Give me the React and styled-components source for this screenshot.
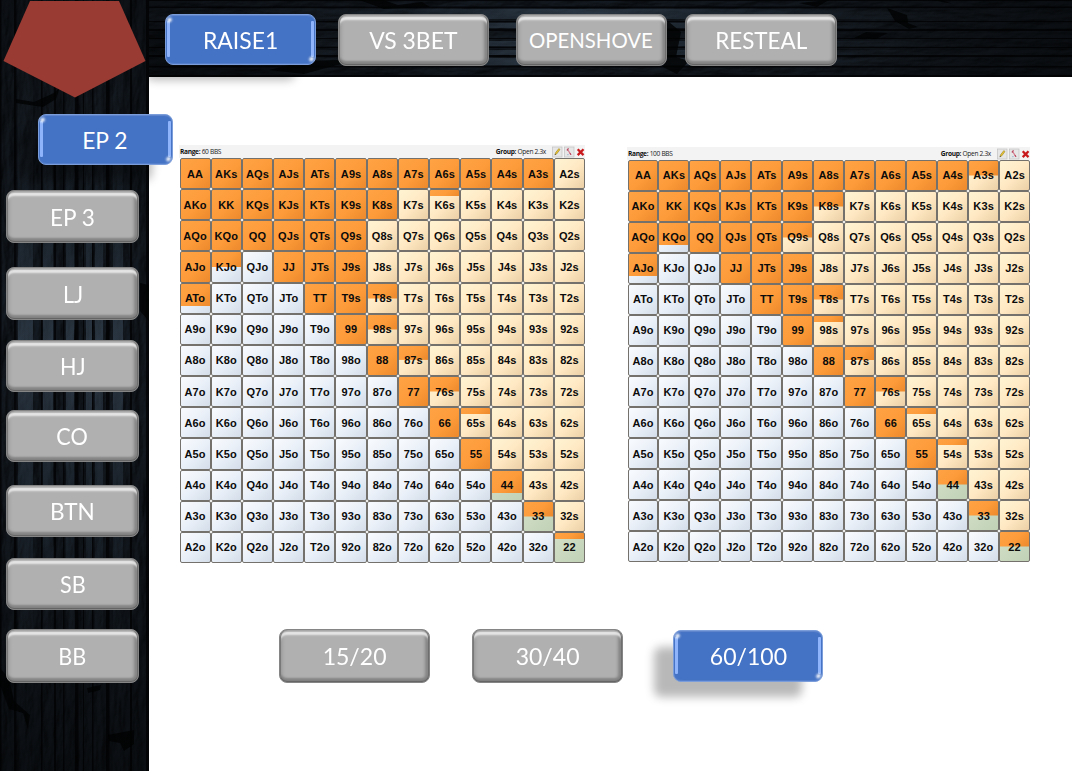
import React from "react";
import styled, { createGlobalStyle, css } from "styled-components";

const Global = createGlobalStyle`
  *, *::before, *::after { box-sizing: border-box; }
  html, body { margin: 0; padding: 0; background: #fff; }
  body { width: 1072px; height: 771px; overflow: hidden; }
`;

const Page = styled.div`
  display: grid;
  grid-template-columns: 149px 923px;
  height: 771px;
  overflow: hidden;
  font-family: Lato, "Liberation Sans", sans-serif;
`;

const Sidebar = styled.aside`
  position: relative;
  z-index: 2;
  display: flex;
  flex-direction: column;
  height: 771px;
  background: #05080b;
`;

const Main = styled.main`
  position: relative;
  z-index: 1;
  display: flex;
  flex-direction: column;
`;

const TopBar = styled.nav`
  position: relative;
  display: flex;
  align-items: flex-start;
  height: 77px;
  padding: 14px 0 0 16px;
  background: #05080b;
`;

const Backdrop = styled.svg`
  position: absolute;
  top: 0;
  left: 0;
  display: block;
`;

const Pentagon = styled.svg`
  position: relative;
  flex: none;
  display: block;
`;

const greyFace = css`
  background: #b0b0b0;
  border: 1px solid #858585;
  box-shadow:
    inset 0 -1px 1px #626262,
    inset 1px 0 1px #777,
    inset -1px 0 1px #6c6c6c,
    inset 0 2px 1px #b4b4b4,
    inset 0 5px 2px #e6e6e6,
    inset 0 -4px 2px #858585,
    inset 3px 0 3px #a0a0a0,
    inset -4px 0 3px #858585;
`;

const blueFace = css`
  background: #4472c4;
  border: 1px solid #7b9dda;
  box-shadow:
    inset 0 1px 1px #6389cf,
    inset 0 -1px 1px #5580cd,
    -20px 16px 10px -1px rgba(0, 0, 0, 0.28);
  &::before, &::after {
    content: "";
    position: absolute;
    top: 6px;
    bottom: 7px;
    width: 3px;
    background: #8fb4fb;
    border-radius: 1px;
    filter: blur(0.3px);
  }
  &::before { left: 1px; }
  &::after { right: 1px; }
`;

const Button = styled.button`
  position: relative;
  flex: none;
  display: flex;
  align-items: center;
  justify-content: center;
  width: ${(p) => p.$w}px;
  height: ${(p) => p.$h || 52}px;
  margin: ${(p) => p.$m || "0"};
  padding: 0;
  border-radius: 8px;
  color: #fff;
  font: 400 ${(p) => p.$size || 23.5}px/30px Lato, "Liberation Sans", sans-serif;
  white-space: nowrap;
  ${(p) => (p.$active ? blueFace : greyFace)}
`;

const Label = styled.span`
  display: block;
  transform: translateX(${(p) => p.$dx || 0}px) scaleX(${(p) => p.$sx || 0.92});
`;

const Glint = styled.i`
  position: absolute;
  z-index: 1;
  width: 5px;
  height: 4px;
  border-radius: 50%;
  background: #fff;
  filter: blur(0.8px);
  transform: rotate(-45deg);
  ${(p) => (p.$end ? "right: 1px; bottom: 3px;" : "left: 1px; top: 3px;")}
`;

const Charts = styled.section`
  display: flex;
  align-items: flex-start;
  height: 552px;
  padding: 68px 0 0 30px;
`;

const Chart = styled.div`
  flex: none;
  width: ${(p) => p.$size + 1}px;
  margin: ${(p) => p.$m || "0"};
`;

const ChartHead = styled.header`
  display: flex;
  align-items: center;
  height: 13px;
  padding: 0 0 0 1px;
  background: #f3f3f3;
  color: #222;
  font: 400 6.6px/13px "Open Sans", "Noto Sans", sans-serif;
  letter-spacing: -0.32px;
  white-space: nowrap;
  b { color: #111; font-weight: 700; }
  span:nth-child(2) { margin-left: auto; margin-right: 6px; }
`;

const Tools = styled.svg`
  display: block;
  flex: none;
`;

const Matrix = styled.div`
  display: grid;
  grid-template-columns: repeat(13, 1fr);
  grid-template-rows: repeat(13, 1fr);
  width: ${(p) => p.$size + 0.6}px;
  height: ${(p) => p.$size}px;
  margin-left: 0.5px;
`;

const tint = {
  s: "linear-gradient(135deg, #fff2d0 10%, #ffe9c4 50%, #ecd0a6 100%)",
  o: "linear-gradient(135deg, #f6f9fd 10%, #eaf0f8 50%, #d3dde9 100%)",
  p: "linear-gradient(135deg, #d3e0c9, #c0d1b6)",
};

const Cell = styled.div`
  display: flex;
  align-items: center;
  justify-content: center;
  min-width: 0;
  border: 1px solid #74716c;
  border-radius: 2px;
  color: #0b0b0b;
  font: 700 11px/12px "Liberation Sans", Arial, sans-serif;
  letter-spacing: 0.12px;
  background:
    linear-gradient(135deg, #ffa344 0%, #fd9b3a 55%, #ec8a2c 100%) 0 0 / 100% ${(p) => p.$fill * 100}% no-repeat,
    ${(p) => tint[p.$kind]};
`;

const StackRow = styled.footer`
  display: flex;
  align-items: flex-start;
  padding-left: 130px;
`;

const RANKS = "AKQJT98765432".split("");

const range60 = {
  full: "AA AKs AQs AJs ATs A9s A8s A7s A6s A5s A4s A3s AKo KK KQs KJs KTs K9s K8s AQo KQo QQ QJs QTs Q9s AJo JJ JTs J9s TT T9s 99 88 77 66 55".split(" "),
  part: { K6s: 0.21, KJo: 0.5, ATo: 0.77, T8s: 0.5, "98s": 0.5, "87s": 0.48, "76s": 0.5, "65s": 0.21, 44: 0.76, 33: 0.5, 22: 0.21 },
};

const range100 = {
  full: "AA AKs AQs AJs ATs A9s A8s A7s A6s A5s A4s AKo KK KQs KJs KTs K9s AQo QQ QJs QTs JJ JTs J9s TT T9s 99 88 77 66 55".split(" "),
  part: { A3s: 0.5, K8s: 0.5, Q9s: 0.5, KQo: 0.76, AJo: 0.76, T8s: 0.5, "98s": 0.21, "87s": 0.48, "76s": 0.5, "65s": 0.21, "54s": 0.21, 44: 0.5, 33: 0.5, 22: 0.5 },
};

function RangeChart({ title, range, size, m }) {
  return (
    <Chart $size={size} $m={m}>
      <ChartHead>
        <span><b>Range:</b> {title}</span>
        <span><b>Group:</b> Open 2.3x</span>
        <Tools width="33" height="12" viewBox="0 0 33 12">
          <rect x="0.5" y="1" width="9.5" height="10" fill="#e6e6e6" stroke="#c6c6c6" strokeWidth="0.8" />
          <path d="M3 8.8 3.5 6.8 6.8 2.6 8 3.6 4.7 7.900Z" fill="#edc52f" stroke="#96832d" strokeWidth="0.6" />
          <path d="M2.4 9.3 3.4 7.8 4 8.4Z" fill="#444" />
          <rect x="12.5" y="1" width="9.5" height="10" fill="#e6e6e6" stroke="#c6c6c6" strokeWidth="0.8" />
          <path d="M15.500 3.200 18.800 8.600" stroke="#d4798c" strokeWidth="1.2" />
          <path d="M15.300 4.800V3L17 2.800M18 7 19 9" stroke="#b23952" strokeWidth="0.9" fill="none" />
          <path d="M15.200 8.700h1.400" stroke="#7da2cc" strokeWidth="0.8" />
          <path d="M25.700 3.300 31.500 9.100M31.500 3.300 25.700 9.100" stroke="#c9191c" strokeWidth="2.300" />
        </Tools>
      </ChartHead>
      <Matrix $size={size}>
        {RANKS.map((r, i) =>
          RANKS.map((c, j) => {
            const kind = i === j ? "p" : j > i ? "s" : "o";
            const hand = kind === "p" ? r + c : kind === "s" ? r + c + "s" : c + r + "o";
            const fill = range.full.includes(hand) ? 1 : range.part[hand] || 0;
            return <Cell key={hand} $kind={kind} $fill={fill}>{hand}</Cell>;
          })
        )}
      </Matrix>
    </Chart>
  );
}

function PushButton({ children, active, sx, dx, ...rest }) {
  return (
    <Button $active={active} {...rest}>
      {active && <Glint />}
      <Label $sx={sx} $dx={dx}>{children}</Label>
      {active && <Glint $end />}
    </Button>
  );
}

// Dark timber: rough grain with long seams and a few lighter boards.
function Wood({ id, width, height, vertical, seams, boards, knots }) {
  const band = (a, b) => (vertical ? { x: a, y: 0, width: b, height } : { x: 0, y: a, width, height: b });
  const dir = vertical ? { x1: 0, y1: 0, x2: 0, y2: 1 } : { x1: 0, y1: 0, x2: 1, y2: 0 };
  return (
    <Backdrop width={width} height={height} viewBox={`0 0 ${width} ${height}`}>
      <defs>
        <filter id={id + "-grain"} x="0" y="0" width="100%" height="100%" colorInterpolationFilters="sRGB">
          <feTurbulence type="fractalNoise" baseFrequency={vertical ? "0.11 0.03" : "0.03 0.11"} numOctaves="5" seed="8" result="n" />
          <feDiffuseLighting in="n" surfaceScale="2" diffuseConstant="0.95" lightingColor="#19212a">
            <feDistantLight azimuth="225" elevation="42" />
          </feDiffuseLighting>
        </filter>
        <linearGradient id={id + "-lit"} gradientUnits="userSpaceOnUse" x1="0" y1="0" x2={vertical ? 0 : width} y2={vertical ? height : 0}>
          <stop offset="0" stopColor="#44586c" stopOpacity="0.03" />
          <stop offset="0.22" stopColor="#44586c" stopOpacity="0.1" />
          <stop offset="0.46" stopColor="#4e6479" stopOpacity="0.42" />
          <stop offset="0.66" stopColor="#44586c" stopOpacity="0.2" />
          <stop offset="0.86" stopColor="#44586c" stopOpacity="0.02" />
        </linearGradient>
        <linearGradient id={id + "-edge"} {...dir}>
          <stop offset="0" stopColor="#000" stopOpacity="0.3" />
          <stop offset="0.4" stopColor="#000" stopOpacity="0" />
          <stop offset="0.7" stopColor="#000" stopOpacity="0.1" />
          <stop offset="1" stopColor="#000" stopOpacity="0.45" />
        </linearGradient>
      </defs>
      <rect width={width} height={height} filter={`url(#${id}-grain)`} />
      {boards.map(([a, b]) => <rect key={a} {...band(a, b)} fill={`url(#${id}-lit)`} />)}
      {seams.map(([a, b]) => <rect key={a} {...band(a, b)} fill="#010203" opacity="0.75" />)}
      {knots.map((d) => <path key={d} d={d} fill="#010203" opacity="0.8" />)}
      <rect width={width} height={height} fill={`url(#${id}-edge)`} />
    </Backdrop>
  );
}

export default function App() {
  return (
    <>
      <Global />
      <Page>
        <Sidebar>
          <Wood
            id="side" width={149} height={771} vertical
            seams={[[0, 1.5], [14, 2.5], [41, 1.5], [54, 2], [63, 1.5], [75, 3.5], [83, 1], [92, 1.5], [106, 3.5], [130, 2], [146, 3]]}
            boards={[[18, 15], [43, 10], [66, 8], [86, 6], [95, 8], [113, 10]]}
            knots={["M16 99l18 3 20-9 6-6-4 12-13 8-27-4z", "M108 735l26-5 0 14-10 7-4-8-11-2z", "M140 283l9 2v36l-9-10z", "M0 668l9 10 5 23 16 14-2 14-5-16-14-4-9-24z", "M87 688l14-3-1 5-12 3z"]}
          />
          <Pentagon width="149" height="98" viewBox="0 0 149 98">
            <path d="M30 1H119L145.500 61 75 97.500 3.500 61Z" fill="#993b33" />
          </Pentagon>
          <PushButton active $w={135} $h={51} $m="16px 0 0 38px" sx={0.97} dx={-0.5}>EP 2</PushButton>
          <PushButton $w={133} $m="25px 0 0 6px" $h={53} sx={0.96}>EP 3</PushButton>
          <PushButton $w={133} $m="24px 0 0 6px" $h={53}>LJ</PushButton>
          <PushButton $w={133} $m="20px 0 0 6px">HJ</PushButton>
          <PushButton $w={133} $m="18px 0 0 6px">CO</PushButton>
          <PushButton $w={133} $m="23px 0 0 6px" sx={0.96}>BTN</PushButton>
          <PushButton $w={133} $m="21px 0 0 6px">SB</PushButton>
          <PushButton $w={133} $m="19px 0 0 6px" $h={54}>BB</PushButton>
        </Sidebar>
        <Main>
          <TopBar>
            <Wood
              id="top" width={923} height={77}
              seams={[[0, 1], [6.5, 1.5], [21, 1], [29, 2], [38, 1], [47, 1], [55, 2], [66, 1.5], [75, 2]]}
              boards={[[9, 10], [23, 5], [41, 5], [50, 5], [58, 7]]}
              knots={["M210 0h24l15 5 24-3 8 5-46 2z", "M738 8l20 7 1 8 10 4-9 2-14-8z", "M705 38l12-6 22 1-12 6z", "M510 26l10-4 12 10-5 25 13 4-12 13-14-7 4-19-9-10z", "M120 70l36-9 33-1 20 2-21 3-33 9z", "M804 4l-26-5h12z", "M650 3l30-3-12 7z"]}
            />
            <PushButton active $w={151} $h={51} sx={0.975}>RAISE1</PushButton>
            <PushButton $w={151} $m="0 0 0 22px" sx={0.975}>VS 3BET</PushButton>
            <PushButton $w={151} $m="0 0 0 27px" $size={22} sx={0.925} dx={-1}>OPENSHOVE</PushButton>
            <PushButton $w={152} $m="0 0 0 18px" sx={0.955}>RESTEAL</PushButton>
          </TopBar>
          <Charts>
            <RangeChart title="60 BBS" range={range60} size={405} />
            <RangeChart title="100 BBS" range={range100} size={402} m="2px 0 0 42px" />
          </Charts>
          <StackRow>
            <PushButton $w={151} $h={54} sx={0.98}>15/20</PushButton>
            <PushButton $w={151} $h={54} $m="0 0 0 42px" sx={0.98}>30/40</PushButton>
            <PushButton active $w={150} $h={52} $m="1px 0 0 50px" sx={0.98}>60/100</PushButton>
          </StackRow>
        </Main>
      </Page>
    </>
  );
}
